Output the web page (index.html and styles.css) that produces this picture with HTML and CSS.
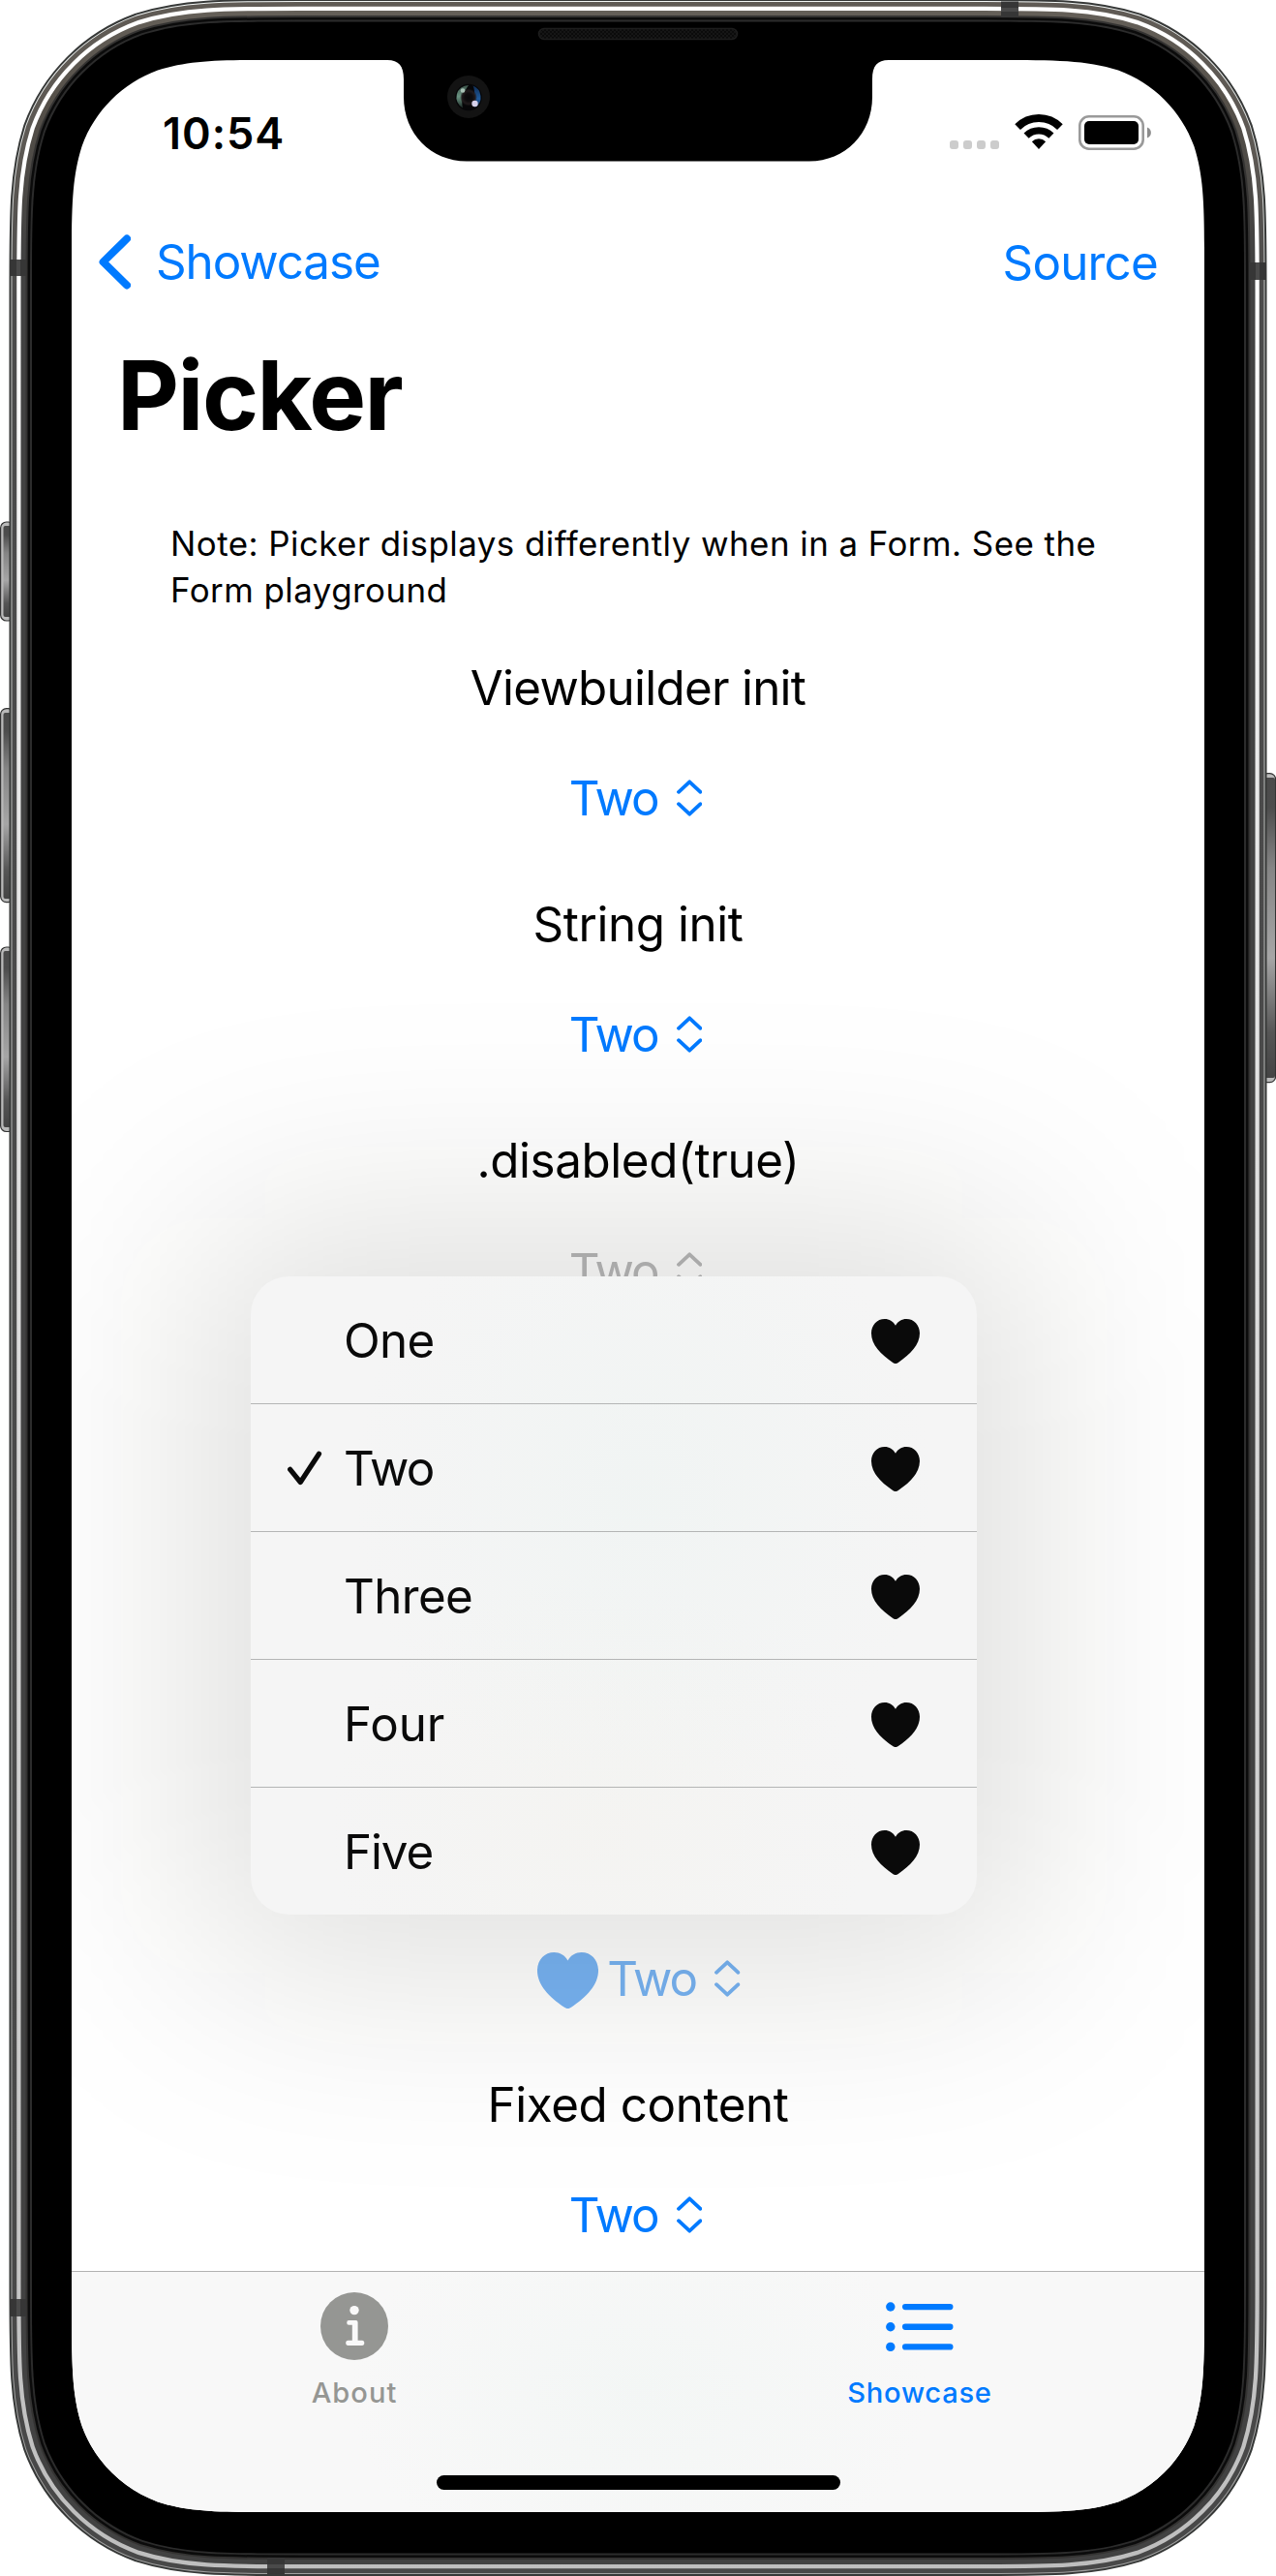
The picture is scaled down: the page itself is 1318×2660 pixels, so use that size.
FILE: index.html
```html
<!DOCTYPE html>
<html lang="en">
<head>
<meta charset="utf-8">
<title>Picker</title>
<link rel="stylesheet" href="styles.css">
</head>
<body>
<svg class="frame" width="1318" height="2660" viewBox="0 0 1318 2660" aria-hidden="true">
  <defs>
    <path id="body" d="M309.7,22.5 H1008.3 C1088,22.5 1127.8,22.5 1170.7,36.1 C1217.5,53.1 1254.4,90 1271.4,136.8 C1285,179.7 1285,219.5 1285,299.2 V2359.8 C1285,2439.5 1285,2479.3 1271.4,2522.2 C1254.4,2569 1217.5,2605.9 1170.7,2622.9 C1127.8,2636.5 1088,2636.5 1008.3,2636.5 H309.7 C230,2636.5 190.2,2636.5 147.3,2622.9 C100.5,2605.9 63.6,2569 46.6,2522.2 C33,2479.3 33,2439.5 33,2359.8 V299.2 C33,219.5 33,179.7 46.6,136.8 C63.6,90 100.5,53.1 147.3,36.1 C190.2,22.5 230,22.5 309.7,22.5Z"/>
    <linearGradient id="metal" gradientUnits="userSpaceOnUse" x1="0" y1="0" x2="0" y2="2660">
      <stop offset="0" stop-color="#605b55"/><stop offset=".06" stop-color="#5c5853"/><stop offset=".12" stop-color="#4b4b4b"/><stop offset="1" stop-color="#484848"/>
    </linearGradient>
    <linearGradient id="metal-inner" gradientUnits="userSpaceOnUse" x1="0" y1="0" x2="0" y2="2660">
      <stop offset="0" stop-color="#66615a"/><stop offset=".04" stop-color="#555049"/><stop offset=".1" stop-color="#424242"/><stop offset="1" stop-color="#424242"/>
    </linearGradient>
    <linearGradient id="shine" gradientUnits="userSpaceOnUse" x1="0" y1="0" x2="0" y2="2660">
      <stop offset="0" stop-color="#fff"/><stop offset=".1" stop-color="#fff"/><stop offset=".3" stop-color="#e9e9e9"/><stop offset="1" stop-color="#bebebe"/>
    </linearGradient>
    <linearGradient id="rim" gradientUnits="userSpaceOnUse" x1="0" y1="0" x2="0" y2="2660">
      <stop offset="0" stop-color="#f2f6f5"/><stop offset=".1" stop-color="#c4c6c4"/><stop offset="1" stop-color="#a0a0a0"/>
    </linearGradient>
    <linearGradient id="key" x1="0" y1="0" x2="0" y2="1">
      <stop offset="0" stop-color="#4a4a4a"/><stop offset=".1" stop-color="#4d4d4d"/><stop offset=".3" stop-color="#858585"/><stop offset=".6" stop-color="#a6a6a6"/><stop offset=".85" stop-color="#555"/><stop offset="1" stop-color="#444"/>
    </linearGradient>
    <radialGradient id="pupil">
      <stop offset="0" stop-color="#08080a"/><stop offset=".45" stop-color="#0e0c0e"/><stop offset=".75" stop-color="#201a1c"/><stop offset="1" stop-color="#201a1c" stop-opacity="0"/>
    </radialGradient>
    <linearGradient id="green" x1="0" y1="0" x2="0" y2="1"><stop offset="0" stop-color="#3c5349"/><stop offset=".5" stop-color="#6a9482"/><stop offset="1" stop-color="#1d2a26"/></linearGradient>
    <linearGradient id="blue" x1="0" y1="0" x2="0" y2="1"><stop offset="0" stop-color="#0f2c52"/><stop offset=".6" stop-color="#1f5a9c"/><stop offset="1" stop-color="#152c50"/></linearGradient>
    <pattern id="mesh" width="4" height="4" patternUnits="userSpaceOnUse">
      <rect width="4" height="4" fill="#161616"/><rect width="2" height="2" fill="#0b0b0b"/><rect x="2" y="2" width="2" height="2" fill="#0b0b0b"/>
    </pattern>
  </defs>
  <g stroke="#333" stroke-width="1.2">
    <g fill="#b9b9b9">
      <rect x=".6" y="539" width="14" height="102" rx="6"/><rect x=".6" y="731.6" width="14" height="200" rx="6"/>
      <rect x=".6" y="978" width="14" height="190.500" rx="6"/><rect x="1303" y="798.6" width="14.6" height="319" rx="6"/>
    </g>
    <g fill="url(#key)" stroke="none">
      <rect x="3.500" y="543" width="11" height="94" rx="2"/><rect x="3.500" y="736" width="11" height="192" rx="2"/>
      <rect x="3.500" y="982" width="11" height="182" rx="2"/><rect x="1303" y="803" width="14" height="310" rx="2"/>
    </g>
  </g>
  <g fill="none">
    <use href="#body" stroke="#363837" stroke-width="47"/>
    <use href="#body" stroke="url(#rim)" stroke-width="43"/>
    <use href="#body" stroke="url(#metal)" stroke-width="41"/>
    <use href="#body" stroke="url(#shine)" stroke-width="31.5"/>
    <use href="#body" stroke="url(#metal-inner)" stroke-width="23"/>
    <use href="#body" stroke="#343332" stroke-width="13"/>
    <use href="#body" stroke="#0b0b0b" stroke-width="9"/>
    <use href="#body" stroke="#2c2c2c" stroke-width="4"/>
  </g>
  <use href="#body" fill="#000"/>
  <g fill="#363636">
    <path d="M10,268h17v17h-17zM10,2374h17v18h-17zM1290,271h18v18h-18zM1034,1.500h18v16.500h-18zM276,2641h18v17h-18z"/>
  </g>
  <g fill="#4a4a4a">
    <path d="M17,268h4v17h-4zM17,2374h4v18h-4zM1297,271h4v18h-4zM1034,8h18v4h-18zM276,2648h18v4h-18z"/>
  </g>
  <rect x="556.500" y="29.500" width="205" height="11" rx="5.500" fill="url(#mesh)" stroke="#1d1d1d" stroke-width="1.500"/>
  <circle cx="484" cy="100" r="22" fill="#131313"/>
  <circle cx="484" cy="100.500" r="13.800" fill="#060608"/>
  <path d="M484,88 A12.500 12.500 0 0 0 478,111.500 C476,104 478,96 484,88Z" fill="url(#green)"/>
  <path d="M488.500,88.500 A12.700 12.700 0 0 1 491,110.800 C486,108 493,98 488.500,88.500Z" fill="url(#blue)"/>
  <circle cx="484" cy="100.500" r="9" fill="url(#pupil)"/>
  <circle cx="478" cy="93.500" r="2.300" fill="#a9c2b6"/>
  <circle cx="490.500" cy="107" r="3.200" fill="#d5d0ea"/>
</svg>

<svg class="symbols" width="0" height="0" aria-hidden="true">
  <symbol id="heart" viewBox="0 0 50 46.300"><path fill="currentColor" d="M25 6.700C22.500 2.300 18.500 0 13.800 0C5.800 0 0 6.300 0 14.800C0 26.500 9.500 36.500 22.500 45.200Q25 46.900 27.500 45.200C40.500 36.500 50 26.500 50 14.800C50 6.300 44.200 0 36.200 0C31.500 0 27.500 2.300 25 6.700Z"/></symbol>
  <symbol id="updown" viewBox="0 0 26.500 38"><path fill="none" stroke="currentColor" stroke-width="3.800" stroke-linecap="round" stroke-linejoin="round" d="M2 12.800L13.250 2.300L24.500 12.800M2 25.200L13.250 35.700L24.500 25.200"/></symbol>
</svg>

<main class="screen">
  <header class="status">
    <span class="time">10:54</span>
    <svg width="208" height="37" viewBox="981 118 208 37" aria-hidden="true">
      <g fill="#ccc"><rect x="981" y="145" width="9" height="9" rx="3"/><rect x="995" y="145" width="9" height="9" rx="3"/><rect x="1009" y="145" width="9" height="9" rx="3"/><rect x="1023" y="145" width="9" height="9" rx="3"/></g>
      <g fill="none" stroke="#000"><path stroke-width="8" d="M1051.100 131.100A31 31 0 0 1 1094.900 131.100"/><path stroke-width="7.300" d="M1060.100 140.100A18.300 18.300 0 0 1 1085.900 140.100"/></g>
      <path d="M1065.900 146.200A10 10 0 0 1 1080.100 146.200L1073 154Z"/>
      <rect x="1115.300" y="120.300" width="65.400" height="33.400" rx="9.500" fill="none" stroke="#9a9a9a" stroke-width="2.600"/>
      <rect x="1120" y="125" width="56" height="24" rx="5"/>
      <path fill="#8c8c8c" d="M1185 131.500C1190.200 133.500 1190.200 140.500 1185 142.500Z"/>
    </svg>
  </header>

  <nav class="navbar">
    <a class="back"><svg width="33" height="57" viewBox="0 0 33 57"><path fill="none" stroke="currentColor" stroke-width="8" stroke-linecap="round" stroke-linejoin="round" d="M29 4.500L4.600 28.500L29 52.500"/></svg><span>Showcase</span></a>
    <a class="source">Source</a>
  </nav>

  <h1 class="title">Picker</h1>
  <p class="note">Note: Picker displays differently when in a Form. See the Form playground</p>

  <div class="sections">
    <section><h2 class="viewbuilder">Viewbuilder init</h2><div class="picker"><span>Two</span><svg class="arrows"><use href="#updown"/></svg></div></section>
    <section><h2>String init</h2><div class="picker"><span>Two</span><svg class="arrows"><use href="#updown"/></svg></div></section>
    <section><h2>.disabled(true)</h2><div class="picker disabled"><span>Two</span><svg class="arrows"><use href="#updown"/></svg></div></section>
    <section class="active"><div class="picker pressed"><svg class="label-heart"><use href="#heart"/></svg><span>Two</span><svg class="arrows"><use href="#updown"/></svg></div></section>
    <section><h2>Fixed content</h2><div class="picker"><span>Two</span><svg class="arrows"><use href="#updown"/></svg></div></section>
  </div>

  <ul class="menu">
    <li><span class="check"></span><span class="option">One</span><svg class="icon"><use href="#heart"/></svg></li>
    <li><span class="check"><svg width="36" height="36" viewBox="0 0 36 36"><path fill="none" stroke="currentColor" stroke-width="5.200" stroke-linecap="round" stroke-linejoin="round" d="M2.700 19.300L13.300 32.500L32.500 3.200"/></svg></span><span class="option two">Two</span><svg class="icon"><use href="#heart"/></svg></li>
    <li><span class="check"></span><span class="option">Three</span><svg class="icon"><use href="#heart"/></svg></li>
    <li><span class="check"></span><span class="option four">Four</span><svg class="icon"><use href="#heart"/></svg></li>
    <li><span class="check"></span><span class="option five">Five</span><svg class="icon"><use href="#heart"/></svg></li>
  </ul>

  <footer class="tabbar">
    <div class="tabs">
      <a class="tab about">
        <svg width="70" height="70" viewBox="0 0 70 70"><circle cx="35" cy="35" r="35" fill="currentColor"/><g fill="#f9f9f9"><circle cx="35" cy="18.600" r="4.700"/><path d="M29.300 29H36.600Q38.600 29 38.600 31V49.700H43Q45.300 49.700 45.300 52.300Q45.300 55 43 55H28.500Q26.200 55 26.200 52.300Q26.200 49.700 28.500 49.700H32.800V33.800H29.300Q27.200 33.800 27.200 31.400Q27.200 29 29.300 29Z"/></g></svg>
        <span>About</span>
      </a>
      <a class="tab current">
        <svg width="70" height="70" viewBox="0 0 70 70"><g fill="currentColor"><circle cx="4.800" cy="15" r="4.700"/><circle cx="4.800" cy="35.700" r="4.700"/><circle cx="4.800" cy="56.400" r="4.700"/><rect x="17" y="11.900" width="52.500" height="6.300" rx="3.100"/><rect x="17" y="32.600" width="52.500" height="6.300" rx="3.100"/><rect x="17" y="53.300" width="52.500" height="6.300" rx="3.100"/></g></svg>
        <span>Showcase</span>
      </a>
    </div>
    <div class="home"></div>
  </footer>
</main>
</body>
</html>
```
FILE: styles.css
```css
* { box-sizing: border-box; }

body {
  position: relative;
  width: 1318px;
  height: 2660px;
  margin: 0;
  padding: 62px 74px 66px;
  overflow: hidden;
  background: #fff;
  color: #000;
  font: 49.3px/60px Inter, "Liberation Sans", sans-serif;
}

h1, h2, p, ul { margin: 0; padding: 0; }
svg { display: block; flex: none; }

.frame { position: absolute; top: 0; left: 0; }
.symbols { position: absolute; }

.screen {
  position: relative;
  display: flex;
  flex-direction: column;
  width: 1170px;
  height: 2532px;
  background: #fff;
  clip-path: path("M215.5,0 H326 C338,0 343,6 343,20 V38 C343,76 371,104.5 408,104.5 H762 C799,104.5 827,76 827,38 V20 C827,6 832,0 844,0 H954.5 C1016.5,0 1047.6,0 1081,10.6 C1117.4,23.8 1146.2,52.6 1159.4,89 C1170,122.4 1170,153.5 1170,215.5 V2316.5 C1170,2378.5 1170,2409.6 1159.4,2443 C1146.2,2479.4 1117.4,2508.2 1081,2521.4 C1047.6,2532 1016.5,2532 954.5,2532 H215.5 C153.5,2532 122.4,2532 89,2521.4 C52.6,2508.2 23.8,2479.4 10.6,2443 C0,2409.6 0,2378.5 0,2316.5 V215.5 C0,153.5 0,122.4 10.6,89 C23.8,52.6 52.6,23.8 89,10.6 C122.4,0 153.5,0 215.5,0Z");
}

.status {
  display: flex;
  align-items: center;
  justify-content: space-between;
  height: 149px;
  padding: 0 55px 0 94px;
}
.time {
  padding-top: 2px;
  font-size: 45px;
  font-weight: 600;
  line-height: 60px;
  letter-spacing: 1px;
}

.navbar {
  display: flex;
  align-items: center;
  justify-content: space-between;
  height: 118px;
  padding: 0 48px 0 28px;
  color: #007aff;
}
.back { display: flex; align-items: center; gap: 26px; letter-spacing: -1.04px; }
.source { padding-top: 2px; letter-spacing: -.75px; }

.title {
  margin: 19px 0 0 47px;
  font-size: 98.9px;
  font-weight: 700;
  line-height: 120px;
  letter-spacing: -1.5px;
}

.note {
  width: 980px;
  margin: 69px 0 0 102px;
  font-size: 34.9px;
  line-height: 48px;
  letter-spacing: .46px;
}

.sections {
  display: flex;
  flex-direction: column;
  gap: 70px;
  margin-top: 47px;
  text-align: center;
}
.sections section { display: flex; flex-direction: column; gap: 54px; }
.sections h2 { font-size: inherit; font-weight: 400; letter-spacing: -.4px; }
.sections h2.viewbuilder { letter-spacing: -.71px; }

.picker {
  display: flex;
  align-items: center;
  justify-content: center;
  gap: 19px;
  height: 60px;
  padding-right: 5px;
  color: #007aff;
  letter-spacing: -1.9px;
}
.picker.disabled { color: #b9b9ba; }
.picker.pressed { padding: 0 0 0 2px; color: #77b3f4; }
.arrows { width: 26.5px; height: 38px; margin-top: -1px; }
.label-heart { width: 63px; height: 58.500px; margin: 4px -10px 0 0; }
.active { margin-top: 601px; }

.menu {
  position: absolute;
  isolation: isolate;
  top: 1256px;
  left: 185px;
  width: 750px;
  list-style: none;
  color: #0a0a0a;
}
.menu::before,
.menu::after {
  content: "";
  position: absolute;
  z-index: -1;
  inset: 0;
  border-radius: 39px;
  background:
    radial-gradient(ellipse 300px 330px at 54% 34%, rgba(235, 243, 241, .45), rgba(235, 243, 241, 0)),
    radial-gradient(ellipse 280px 260px at 48% 86%, rgba(243, 242, 237, .45), rgba(243, 242, 237, 0)),
    #f5f5f5;
}
.menu::before {
  z-index: -2;
  inset: -60px;
  border-radius: 90px;
  background: rgba(12, 12, 0, .128);
  filter: blur(112px);
}
.menu li {
  display: flex;
  align-items: center;
  height: 132px;
  padding: 0 59px 0 38px;
  border-bottom: 1px solid #b4b5b5;
}
.menu li:last-child { height: 131px; border-bottom: 0; }
.check { flex: 0 0 58px; }
.option { flex: 1; letter-spacing: -.6px; }
.option.two { letter-spacing: -1.7px; }
.option.four { letter-spacing: 0; }
.option.five { letter-spacing: -1.1px; }
.icon { width: 50px; height: 46.300px; margin-top: 3px; }

.tabbar {
  position: relative;
  z-index: 1;
  margin-top: auto;
  height: 249px;
  border-top: 1px solid #b2b2b2;
  background:
    radial-gradient(ellipse 300px 200px at 50% 50%, rgba(240, 245, 243, .6), rgba(240, 245, 243, 0)),
    #f8f8f8;
}
.tabs { display: flex; padding-right: 2px; }
.tab {
  flex: 1;
  display: flex;
  flex-direction: column;
  align-items: center;
  gap: 16px;
  padding-top: 21px;
  font-size: 29.1px;
  font-weight: 500;
  line-height: 36px;
}
.about { color: #959693; letter-spacing: 1px; }
.current { color: #007aff; letter-spacing: .75px; }
.home {
  width: 417px;
  height: 15px;
  margin: 67px auto 0;
  border-radius: 8px;
  background: #000;
}
```
